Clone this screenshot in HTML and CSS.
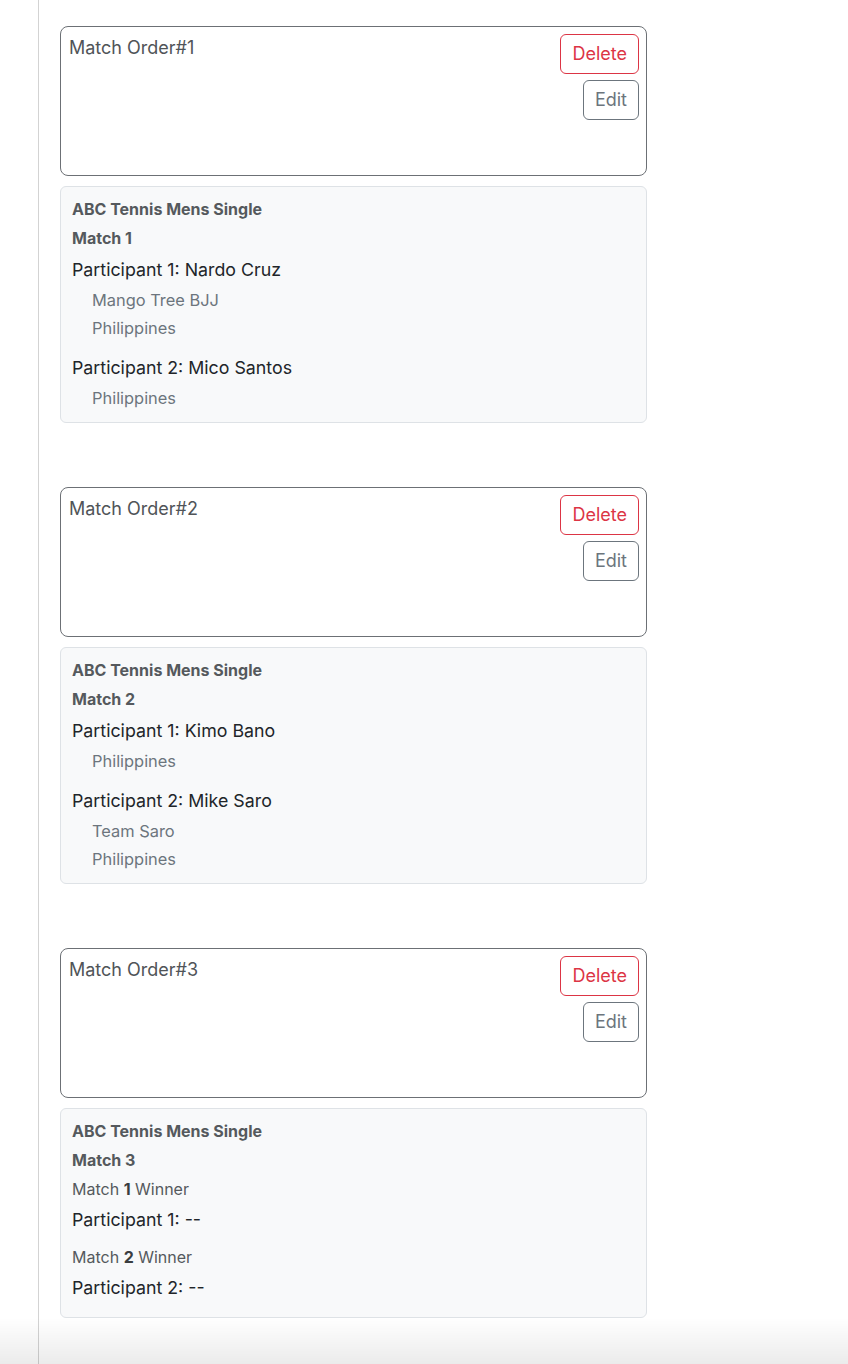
FILE: index.html
```html
<!DOCTYPE html>
<html lang="en">
<head>
<meta charset="utf-8">
<title>Match Orders</title>
<link rel="stylesheet" href="styles.css">
</head>
<body>
<main class="rail">
  <section class="group">
    <div class="order">
      <div class="order-title">Match Order#1</div>
      <div class="actions">
        <button class="btn btn-danger">Delete</button>
        <button class="btn btn-secondary">Edit</button>
      </div>
    </div>
    <div class="info">
      <div class="title">ABC Tennis Mens Single</div>
      <div class="title">Match 1</div>
      <div class="slots">
        <div class="slot">
          <div class="participant">Participant 1: Nardo Cruz</div>
          <ul class="sub">
            <li>Mango Tree BJJ</li>
            <li>Philippines</li>
          </ul>
        </div>
        <div class="slot">
          <div class="participant">Participant 2: Mico Santos</div>
          <ul class="sub">
            <li>Philippines</li>
          </ul>
        </div>
      </div>
    </div>
  </section>

  <section class="group">
    <div class="order">
      <div class="order-title">Match Order#2</div>
      <div class="actions">
        <button class="btn btn-danger">Delete</button>
        <button class="btn btn-secondary">Edit</button>
      </div>
    </div>
    <div class="info">
      <div class="title">ABC Tennis Mens Single</div>
      <div class="title">Match 2</div>
      <div class="slots">
        <div class="slot">
          <div class="participant">Participant 1: Kimo Bano</div>
          <ul class="sub">
            <li>Philippines</li>
          </ul>
        </div>
        <div class="slot">
          <div class="participant">Participant 2: Mike Saro</div>
          <ul class="sub">
            <li>Team Saro</li>
            <li>Philippines</li>
          </ul>
        </div>
      </div>
    </div>
  </section>

  <section class="group">
    <div class="order">
      <div class="order-title">Match Order#3</div>
      <div class="actions">
        <button class="btn btn-danger">Delete</button>
        <button class="btn btn-secondary">Edit</button>
      </div>
    </div>
    <div class="info info-pending">
      <div class="title">ABC Tennis Mens Single</div>
      <div class="title">Match 3</div>
      <div class="slots">
        <div class="slot">
          <div class="winner">Match <b>1</b> Winner</div>
          <div class="participant">Participant 1: --</div>
        </div>
        <div class="slot">
          <div class="winner">Match <b>2</b> Winner</div>
          <div class="participant">Participant 2: --</div>
        </div>
      </div>
    </div>
  </section>
</main>
</body>
</html>
```

FILE: styles.css
```css
* { box-sizing: border-box; }

html, body {
  margin: 0;
  padding: 0;
  background: #ffffff;
}

body {
  font-family: Inter, "Noto Sans", "Liberation Sans", sans-serif;
  color: #212529;
  min-height: 100vh;
}

body::after {
  content: "";
  position: fixed;
  left: 0;
  right: 0;
  bottom: 0;
  height: 46px;
  background: linear-gradient(to bottom, rgba(0, 0, 0, 0), rgba(0, 0, 0, 0.08));
  pointer-events: none;
}

.rail {
  margin-left: 38px;
  border-left: 1px solid #d3d3d3;
  min-height: 100vh;
  padding: 26px 0 40px 21px;
  display: flex;
  flex-direction: column;
  gap: 64px;
}

.group {
  width: 587px;
  display: flex;
  flex-direction: column;
  gap: 10px;
}

.order {
  height: 150px;
  border: 1px solid #6c7075;
  border-radius: 8px;
  padding: 7px 7px 7px 8px;
  display: flex;
  justify-content: space-between;
  align-items: flex-start;
}

.order-title {
  font-size: 18px;
  line-height: 28px;
  color: #505458;
}

.actions {
  display: flex;
  flex-direction: column;
  align-items: flex-end;
  gap: 6px;
}

.btn {
  font-family: inherit;
  font-size: 18px;
  line-height: 26px;
  padding: 6px 11px;
  background: #ffffff;
  border: 1px solid;
  border-radius: 6px;
  cursor: pointer;
}

.btn-danger {
  color: #dc3545;
  border-color: #dc3545;
}

.btn-secondary {
  color: #6c757d;
  border-color: #6c757d;
}

.info {
  background: #f8f9fa;
  border: 1px solid #dee2e6;
  border-radius: 6px;
  padding: 8px 12px 10px 11px;
}

.info-pending {
  padding-bottom: 15px;
}

.title {
  font-size: 16px;
  font-weight: 700;
  line-height: 29px;
  color: #55595d;
}

.slots {
  display: flex;
  flex-direction: column;
  gap: 9px;
}

.participant {
  margin-top: 3px;
  font-size: 17.8px;
  line-height: 28px;
  color: #212529;
}

.sub {
  list-style: none;
  margin: 0;
  padding: 2px 0 0 20px;
}

.sub li {
  font-size: 16.4px;
  line-height: 28px;
  color: #6c757d;
}

.winner {
  font-size: 16px;
  line-height: 28px;
  color: #55595d;
}

.winner b {
  font-weight: 700;
  color: #3a3d40;
}
```
